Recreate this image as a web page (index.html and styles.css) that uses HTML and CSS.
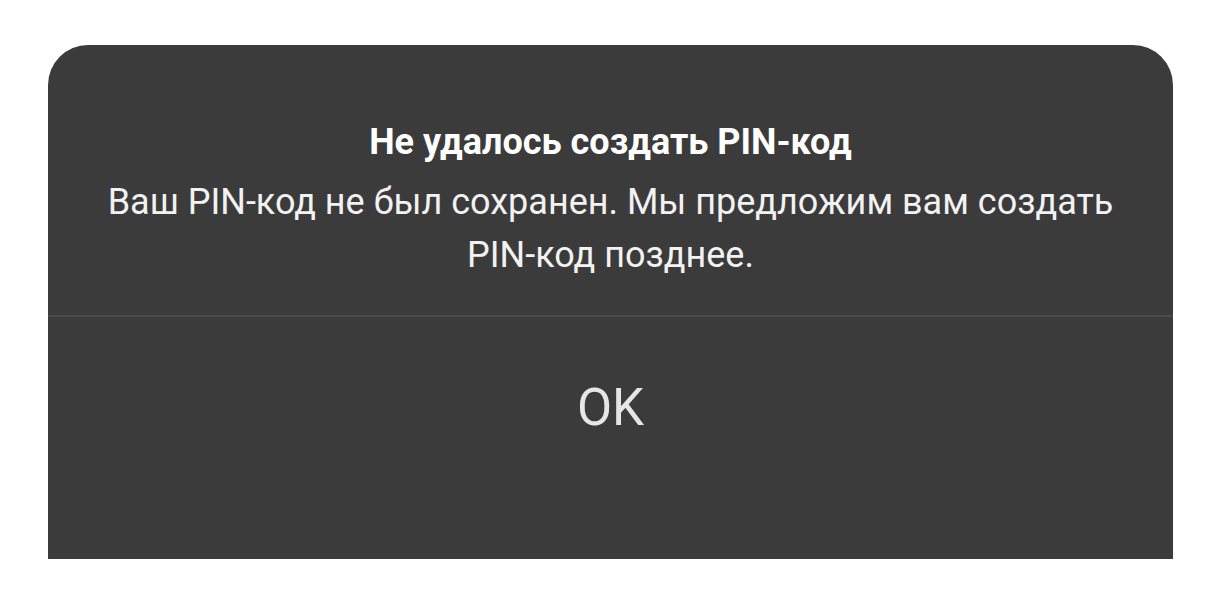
FILE: index.html
```html
<!DOCTYPE html>
<html lang="ru">
<head>
    <meta charset="UTF-8">
    <meta name="viewport" content="width=device-width, initial-scale=1.0">
    <title>PIN-код</title>
    <link rel="stylesheet" href="styles.css">
</head>
<body>

    <div class="dialog">
        <div class="dialog-content">
            <h2 class="dialog-title">Не удалось создать PIN-код</h2>
            <p class="dialog-text">Ваш PIN-код не был сохранен. Мы предложим вам создать PIN-код позднее.</p>
        </div>
        <div class="dialog-actions">
            <button type="button" class="dialog-button">OK</button>
        </div>
    </div>

</body>
</html>
```

FILE: styles.css
```css
body {
    font-family: Roboto, "Noto Sans", sans-serif;
    margin: 0;
    padding: 45px 48px 0;
    background-color: #fff;
}

.dialog {
    width: 1125px;
    height: 514px;
    background-color: #3b3b3b;
    border-radius: 40px 40px 0 0;
    display: flex;
    flex-direction: column;
}

.dialog-content {
    padding: 77px 50px 33px;
    text-align: center;
    border-bottom: 2px solid #4b4b4b;
}

.dialog-title {
    margin: 0 0 14px;
    font-size: 36px;
    line-height: 40px;
    font-weight: bold;
    color: #fff;
}

.dialog-text {
    margin: 0;
    font-size: 36px;
    line-height: 53px;
    color: #f2f2f2;
}

.dialog-actions {
    flex: 1;
    display: flex;
    justify-content: center;
    padding-top: 61px;
}

.dialog-button {
    align-self: flex-start;
    font-family: Roboto, "Noto Sans", sans-serif;
    font-size: 51px;
    line-height: 60px;
    color: #e6e6e6;
    background: none;
    border: none;
    padding: 0;
    cursor: pointer;
}
```
